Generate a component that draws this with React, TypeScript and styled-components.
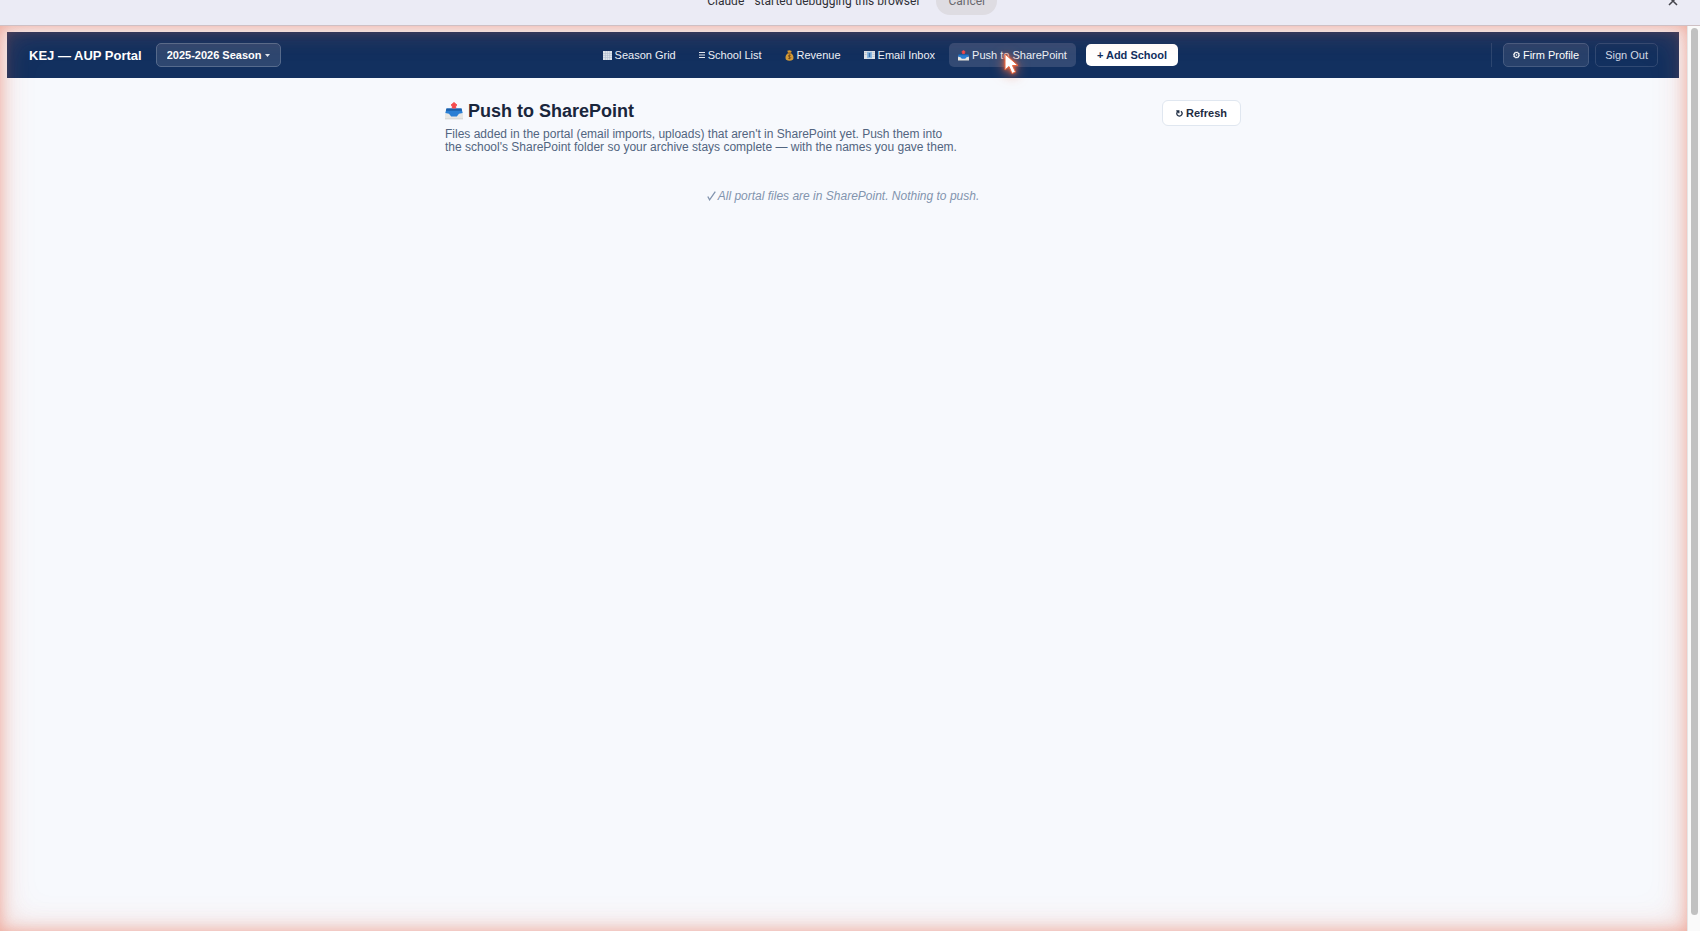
import React from "react";
import styled, { createGlobalStyle } from "styled-components";

const GlobalStyle = createGlobalStyle`
  *, *::before, *::after { box-sizing: border-box; }
  body {
    margin: 0;
    background: #f7f9fd;
    color: #1a263c;
    font-family: "Liberation Sans", Arial, sans-serif;
  }
  button, select {
    font-family: inherit;
    margin: 0;
    cursor: pointer;
  }
`;

const Shell = styled.div`
  display: flex;
  flex-direction: column;
  min-height: 100vh;
`;

const InfoBar = styled.div`
  position: relative;
  display: flex;
  align-items: flex-end;
  justify-content: center;
  gap: 16px;
  height: 26px;
  overflow: hidden;
  background: #ebebf5;
  border-bottom: 1px solid #cfc0c4;
  font-family: Roboto, "Liberation Sans", sans-serif;
  font-size: 12px;
  line-height: 16px;
  color: #303036;
`;

const InfoText = styled.span`
  padding-bottom: 16px;
  white-space: pre;
`;

const InfoCancel = styled.button`
  height: 28px;
  margin-bottom: 10px;
  padding: 0 12px;
  border: 0;
  border-radius: 14px;
  background: #dedce2;
  color: #6a696f;
  font-size: 12px;
  line-height: 28px;
`;

const InfoClose = styled.button`
  position: absolute;
  right: 20px;
  top: -6px;
  display: flex;
  padding: 0;
  border: 0;
  background: none;
  color: #45454c;
`;

const Viewport = styled.div`
  display: flex;
  flex: 1;
`;

const Page = styled.div`
  position: relative;
  flex: 1;
  min-width: 0;
  padding: 6px 8px 8px 7px;
`;

const Glow = styled.div`
  position: absolute;
  inset: 0;
  pointer-events: none;
  box-shadow:
    inset 0 0 14px rgba(235, 105, 75, 0.38),
    inset 0 0 28px rgba(235, 105, 75, 0.26),
    inset 0 0 40px rgba(225, 119, 87, 0.1);
`;

const ScrollTrack = styled.div`
  flex: none;
  width: 13px;
  padding: 2px 2px 16px 3px;
  background: #fafafa;
  border-left: 1px solid #e6e6e6;
  display: flex;
`;

const ScrollThumb = styled.div`
  width: 7px;
  border-radius: 4px;
  background: #c1c1c1;
`;

const Header = styled.header`
  display: flex;
  align-items: center;
  justify-content: space-between;
  height: 46px;
  padding: 0 21px 0 22px;
  background: #12305f;
  color: #fff;
`;

const Group = styled.div`
  display: flex;
  align-items: center;
  gap: 14px;
`;

const Brand = styled.span`
  font-size: 13px;
  font-weight: 700;
  white-space: nowrap;
`;

const SeasonField = styled.label`
  position: relative;
  display: flex;
  align-items: center;

  svg {
    position: absolute;
    right: 11px;
    pointer-events: none;
  }
`;

const SeasonSelect = styled.select`
  appearance: none;
  height: 24px;
  width: 125px;
  padding: 0 12px 0 10px;
  border: 1px solid #566b8d;
  border-radius: 5px;
  background: #2e4770;
  color: #fff;
  font-size: 11px;
  font-weight: 700;
`;

const Nav = styled.nav`
  display: flex;
  align-items: center;
  gap: 5px;
`;

const NavButton = styled.button<{ $active?: boolean }>`
  position: relative;
  display: flex;
  align-items: center;
  gap: 3px;
  height: 24px;
  padding: 0 9px;
  border: 0;
  border-radius: 5px;
  background: ${(p) => (p.$active ? "#334a74" : "transparent")};
  color: #edf1f7;
  font-size: 11px;
  white-space: nowrap;
`;

const AddButton = styled.button`
  height: 22px;
  margin-left: 5px;
  padding: 0 11px;
  border: 0;
  border-radius: 5px;
  background: #fff;
  color: #12305f;
  font-size: 11px;
  font-weight: 700;
  white-space: nowrap;
`;

const Account = styled.div`
  display: flex;
  align-items: center;
  gap: 6px;
  padding-left: 11px;
  border-left: 1px solid #2c4670;
`;

const OutlineButton = styled.button<{ $filled?: boolean }>`
  display: flex;
  align-items: center;
  gap: 3px;
  height: 24px;
  padding: 0 9px;
  border: 1px solid ${(p) => (p.$filled ? "#455b81" : "#304973")};
  border-radius: 5px;
  background: ${(p) => (p.$filled ? "#28416b" : "transparent")};
  color: ${(p) => (p.$filled ? "#fff" : "#d3dae6")};
  font-size: 11px;
  white-space: nowrap;
`;

const Pointer = styled.svg`
  position: absolute;
  left: 55px;
  top: 10px;
  overflow: visible;
  filter: drop-shadow(0 0 2px #f0643c) drop-shadow(0 2px 6px rgba(240, 110, 70, 0.7));
  pointer-events: none;
`;

const Main = styled.main`
  max-width: 796px;
  margin: 0 auto;
  padding-top: 22px;
`;

const Intro = styled.section`
  display: flex;
  align-items: flex-start;
  justify-content: space-between;
`;

const Title = styled.h1`
  display: flex;
  align-items: center;
  gap: 5px;
  margin: 0 0 6px;
  font-size: 18px;
  line-height: 22px;
`;

const Lead = styled.p`
  max-width: 516px;
  margin: 0;
  color: #526580;
  font-size: 12px;
  line-height: 13px;
`;

const RefreshButton = styled.button`
  display: flex;
  align-items: center;
  gap: 3px;
  height: 26px;
  padding: 0 13px;
  border: 1px solid #e0e7f0;
  border-radius: 6px;
  background: #fff;
  color: #1e2c42;
  font-size: 11px;
  font-weight: 700;
`;

const Empty = styled.p`
  display: flex;
  align-items: center;
  justify-content: center;
  gap: 2px;
  margin: 0;
  padding: 34px 0;
  color: #8294ae;
  font-size: 12px;
  line-height: 16px;
  font-style: italic;
`;

const GridIcon = () => (
  <svg width="9" height="9" viewBox="0 0 9 9" aria-hidden="true">
    <path d="M0 0h9v9H0z" fill="#dce3ec" />
    <path d="M2.5 0v9M4.5 0v9M6.5 0v9M0 2.5h9M0 4.5h9M0 6.5h9" stroke="#aebccf" strokeWidth=".5" />
  </svg>
);

const ListIcon = () => (
  <svg width="6" height="8" viewBox="0 0 6 8" aria-hidden="true">
    <path d="M0 1.5h6M0 4h6M0 6.500h6" stroke="#e4e9f1" strokeWidth="1.100" />
  </svg>
);

const MoneyIcon = () => (
  <svg width="9" height="11" viewBox="0 0 9 11" aria-hidden="true">
    <path d="M2.3 .8 4.5.2l2.2.7-.8 2C8 4.3 8.8 6.5 8.4 8.6 8.200 10 7.200 10.700 4.500 10.700S.8 10 .6 8.600C.2 6.500 1 4.300 3.100 2.900z" fill="#d49c38" />
    <path d="M2.600 3h3.800" stroke="#7a4a18" strokeWidth=".9" />
    <path d="M5.900 5.500C5.200 4.900 3.300 5 3.300 6s2.500.7 2.500 1.700-2 1.100-2.800.4M4.500 4.500v4.700" fill="none" stroke="#704719" strokeWidth=".8" />
  </svg>
);

const MailIcon = () => (
  <svg width="11" height="8" viewBox="0 0 11 8" aria-hidden="true">
    <path d="M0 0h11v8H0z" fill="#dfe3e8" />
    <path d="M.5 1.500h2M.5 3.500h2M8.500 1.500h2M8.500 3.500h2M8.500 5.500h2" stroke="#b2bbc7" strokeWidth=".7" />
    <path d="M3 .8h5v6.400H3z" fill="#8ab9e2" />
    <path d="M5.500 2v4" stroke="#3c72ae" strokeWidth="1.500" />
  </svg>
);

const OutboxIcon = ({ size }: { size: number }) => (
  <svg width={size} height={size} viewBox="0 0 18 18" aria-hidden="true">
    <path d="M2 8h14l2 4v4.500H0V12z" fill="#e8e7e4" />
    <path d="M0 16.300h18v1H0z" fill="#d2d1ce" />
    <path d="M1.500 6.500h15l1.200 4.500-3.700.8-2.200 2.700H6.200L4 11.800.300 11z" fill="#2a7fd4" />
    <path d="M1.500 6.500h15l.6 2.200H.9z" fill="#1c5fa8" />
    <path d="M9 .5 12 3.200H10.700V6H7.300V3.200H6z" fill="#f64a4c" stroke="#f64a4c" strokeWidth="1" strokeLinejoin="round" />
  </svg>
);

const GearIcon = () => (
  <svg width="7" height="8" viewBox="0 0 7 8" aria-hidden="true">
    <circle cx="3.500" cy="4" r="2.500" fill="none" stroke="#fff" strokeWidth="1.100" />
    <circle cx="3.500" cy="4" r="3.100" fill="none" stroke="#fff" strokeWidth=".7" strokeDasharray="1.200 1.200" />
    <circle cx="3.500" cy="4" r=".8" fill="#fff" />
  </svg>
);

const RefreshIcon = () => (
  <svg width="7" height="8" viewBox="0 0 7 8" aria-hidden="true">
    <path d="M.3 1.800h2.500v2.400M2.500 2C.8 3 .4 4.600 1.200 5.900c1 1.500 3.400 1.500 4.400 0 .8-1.300.5-2.900-.7-3.700" fill="none" stroke="currentColor" strokeWidth="1.300" />
  </svg>
);

const CheckIcon = () => (
  <svg width="9" height="10" viewBox="0 0 9 10" aria-hidden="true">
    <path d="M.8 5.500 2.600 8.800 8.300.7" fill="none" stroke="currentColor" strokeWidth="1.300" />
  </svg>
);

export default function App() {
  return (
    <Shell>
      <GlobalStyle />
      <InfoBar>
        <InfoText>{"“Claude”  started debugging this browser"}</InfoText>
        <InfoCancel>Cancel</InfoCancel>
        <InfoClose aria-label="Close">
          <svg width="14" height="14" viewBox="0 0 14 14">
            <path d="m3 3 8 8M11 3l-8 8" stroke="currentColor" strokeWidth="1.500" />
          </svg>
        </InfoClose>
      </InfoBar>
      <Viewport>
        <Page>
          <Header>
            <Group>
              <Brand>KEJ — AUP Portal</Brand>
              <SeasonField>
                <SeasonSelect aria-label="Season" defaultValue="2025">
                  <option value="2025">2025-2026 Season</option>
                </SeasonSelect>
                <svg width="5" height="3" viewBox="0 0 5 3" aria-hidden="true">
                  <path d="M0 0h5L2.500 3z" fill="#dfe5ee" />
                </svg>
              </SeasonField>
            </Group>
            <Nav>
              <NavButton><GridIcon />Season Grid</NavButton>
              <NavButton><ListIcon />School List</NavButton>
              <NavButton><MoneyIcon />Revenue</NavButton>
              <NavButton><MailIcon />Email Inbox</NavButton>
              <NavButton $active>
                <OutboxIcon size={11} />Push to SharePoint
                <Pointer width="16" height="22" viewBox="0 0 16 22" aria-hidden="true">
                  <path d="M1 1v16l4-3.500L8 20.500l3.500-1.500-3-6.500H14z" fill="#fff" stroke="#e8643c" strokeWidth="1" strokeLinejoin="round" />
                </Pointer>
              </NavButton>
              <AddButton>+ Add School</AddButton>
            </Nav>
            <Account>
              <OutlineButton $filled><GearIcon />Firm Profile</OutlineButton>
              <OutlineButton>Sign Out</OutlineButton>
            </Account>
          </Header>
          <Main>
            <Intro>
              <div>
                <Title><OutboxIcon size={18} />Push to SharePoint</Title>
                <Lead>
                  Files added in the portal (email imports, uploads) that aren't in SharePoint yet. Push them into
                  the school's SharePoint folder so your archive stays complete — with the names you gave them.
                </Lead>
              </div>
              <RefreshButton><RefreshIcon />Refresh</RefreshButton>
            </Intro>
            <Empty><CheckIcon />All portal files are in SharePoint. Nothing to push.</Empty>
          </Main>
          <Glow />
        </Page>
        <ScrollTrack><ScrollThumb /></ScrollTrack>
      </Viewport>
    </Shell>
  );
}
